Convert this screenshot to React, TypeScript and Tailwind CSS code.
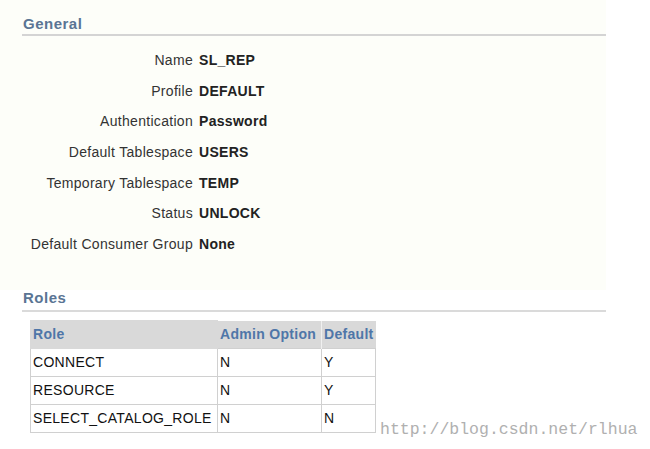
export default function App() {
  const general = [
    ['Name', 'SL_REP'],
    ['Profile', 'DEFAULT'],
    ['Authentication', 'Password'],
    ['Default Tablespace', 'USERS'],
    ['Temporary Tablespace', 'TEMP'],
    ['Status', 'UNLOCK'],
    ['Default Consumer Group', 'None'],
  ];

  const roles = [
    ['CONNECT', 'N', 'Y'],
    ['RESOURCE', 'N', 'Y'],
    ['SELECT_CATALOG_ROLE', 'N', 'N'],
  ];

  return (
    <div className="relative w-[650px] h-[449px] bg-white font-['Liberation_Sans',Arial,sans-serif] text-[14px] tracking-[0.3px] text-[#222]">
      <div className="w-[606px] h-[290px] bg-[#fdfef9] pl-[22px] pt-[16px]">
        {/* General */}
        <div className="w-[584px] border-b-2 border-[#d4d4d4] pb-[2px]">
          <h2 className="text-[15px] leading-[16px] tracking-[0.5px] font-bold text-[#5a7594] pl-px">General</h2>
        </div>
        <div className="mt-[9px] grid grid-cols-[171px_auto] gap-x-[6px]">
          {general.map(([label, value]) => (
            <div key={label} className="contents">
              <div className="h-[30.7px] flex items-center justify-end text-[#333]">{label}</div>
              <div className="h-[30.7px] flex items-center font-bold text-[#222]">{value}</div>
            </div>
          ))}
        </div>
      </div>

      {/* Roles */}
      <div className="pl-[22px] -mt-[1px]">
        <div className="w-[584px] border-b-2 border-[#dadada] pb-[3px]">
          <h2 className="text-[15px] leading-[18px] tracking-[0.5px] font-bold text-[#5a7594] pl-px">Roles</h2>
        </div>
        <table className="ml-[8px] mt-[8px] border-collapse table-fixed w-[345px]">
          <thead>
            <tr className="bg-[#d9d9d9] h-[28px]">
              <th className="w-[187px] text-left font-bold text-[#4f76a8] px-[2px] border border-[#d9d9d9]">Role</th>
              <th className="w-[104px] text-left font-bold text-[#4f76a8] px-[2px] border-l border-[#f0f0f0]">Admin Option</th>
              <th className="w-[54px] text-left font-bold text-[#4f76a8] px-[2px] border-l border-[#f0f0f0] whitespace-nowrap">Default</th>
            </tr>
          </thead>
          <tbody>
            {roles.map(([role, admin, def]) => (
              <tr key={role} className="h-[28px]">
                <td className="border border-[#d0d0d0] px-[2px] text-[#111] whitespace-nowrap">{role}</td>
                <td className="border border-[#d0d0d0] px-[2px] text-[#111]">{admin}</td>
                <td className="border border-[#d0d0d0] px-[2px] text-[#111]">{def}</td>
              </tr>
            ))}
          </tbody>
        </table>
      </div>

      <div className="absolute left-[380px] top-[419px] font-['Liberation_Mono',monospace] text-[16.5px] leading-[22px] tracking-normal text-[#b0b0b0]">
        http://blog.csdn.net/rlhua
      </div>
    </div>
  );
}
